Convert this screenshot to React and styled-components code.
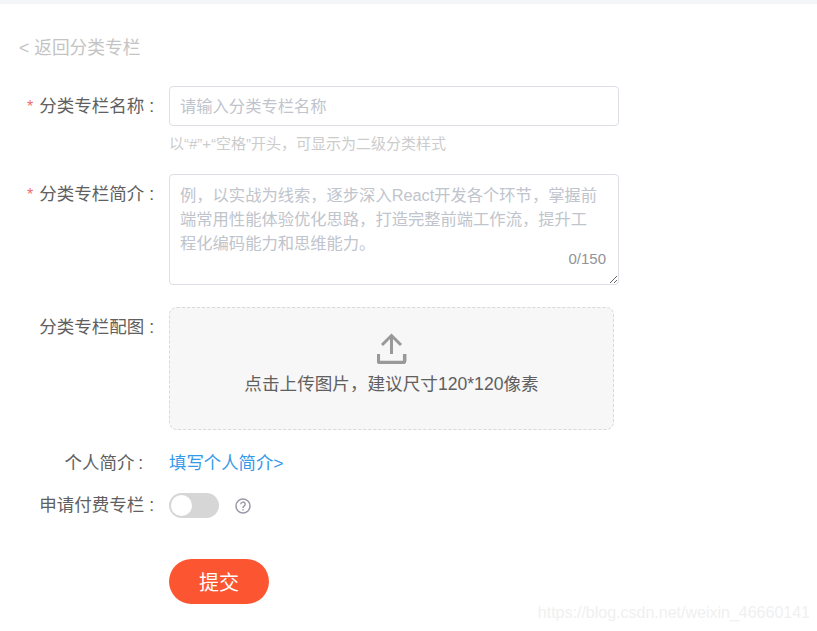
import React from 'react';
import styled, { createGlobalStyle } from 'styled-components';

const GlobalStyle = createGlobalStyle`
  html, body { margin: 0; padding: 0; background: #fff; }
  body { font-family: "Liberation Sans", "Noto Sans CJK SC", sans-serif; color: #555; }
`;

const Page = styled.div`
  position: relative;
  width: 817px;
  height: 631px;
  overflow: hidden;
  border-top: 4px solid #f4f5f7;
  box-sizing: border-box;
`;

const BackLink = styled.a`
  display: block;
  margin: 32px 0 0 19px;
  height: 24px;
  line-height: 24px;
  font-size: 17.7px;
  color: #c4c4c4;
`;

const Form = styled.form`
  display: flex;
  flex-direction: column;
  margin-top: 26px;
`;

const Row = styled.div`
  display: grid;
  grid-template-columns: 169px 1fr;
  align-items: ${p => (p.$center ? 'center' : 'start')};
  margin-top: ${p => p.$top || 0}px;
`;

const Label = styled.label`
  padding-right: ${p => (p.$tight ? 26 : 15)}px;
  height: ${p => (p.$center ? 'auto' : '40px')};
  line-height: ${p => (p.$center ? '23px' : '40px')};
  font-size: 17.5px;
  color: #606060;
  text-align: right;
  white-space: pre;
`;

const Star = styled.span`
  color: #f56c6c;
  margin-right: 6px;
  font-size: 16px;
`;

const TextInput = styled.input`
  display: block;
  width: 450px;
  height: 40px;
  padding: 0 10px;
  box-sizing: border-box;
  border: 1px solid #dcdfe6;
  border-radius: 4px;
  outline: none;
  font: 16.3px "Liberation Sans", "Noto Sans CJK SC", sans-serif;
  &::placeholder { color: #c0c4cc; opacity: 1; }
`;

const Hint = styled.div`
  margin-top: 8px;
  height: 20px;
  line-height: 20px;
  font-size: 15px;
  color: #ccc;
`;

const AreaWrap = styled.div`
  position: relative;
  width: 450px;
  height: 111px;
`;

const TextArea = styled.textarea`
  display: block;
  width: 450px;
  height: 111px;
  padding: 8px 16px 8px 10px;
  box-sizing: border-box;
  border: 1px solid #dcdfe6;
  border-radius: 4px;
  outline: none;
  font: 16.3px/24px "Liberation Sans", "Noto Sans CJK SC", sans-serif;
  &::placeholder { color: #c0c4cc; opacity: 1; }
`;

const Counter = styled.span`
  position: absolute;
  right: 13px;
  bottom: 18px;
  font-size: 15px;
  line-height: 16px;
  color: #909399;
`;

const Upload = styled.div`
  display: flex;
  flex-direction: column;
  align-items: center;
  width: 445px;
  height: 123px;
  padding-top: 25px;
  box-sizing: border-box;
  background: #f7f7f7;
  border: 1px dashed #d9d9d9;
  border-radius: 8px;
`;

const UploadText = styled.div`
  margin-top: 8px;
  line-height: 24px;
  font-size: 17.6px;
  color: #606060;
`;

const BlueLink = styled.a`
  font-size: 17.4px;
  line-height: 24px;
  color: #3499e8;
`;

const SwitchRow = styled.div`
  display: flex;
  align-items: center;
  gap: 16px;
`;

const Switch = styled.span`
  position: relative;
  display: block;
  width: 50px;
  height: 25px;
  border-radius: 13px;
  background: #d6d6d6;
`;

const Knob = styled.span`
  position: absolute;
  top: 2px;
  left: 2px;
  width: 21px;
  height: 21px;
  border-radius: 50%;
  background: #fff;
`;

const SubmitButton = styled.button`
  display: block;
  width: 100px;
  height: 45px;
  padding: 0;
  border: 0;
  border-radius: 23px;
  background: #fc5531;
  color: #fff;
  font: 20px "Liberation Sans", "Noto Sans CJK SC", sans-serif;
`;

const Watermark = styled.div`
  position: absolute;
  right: 7px;
  bottom: 8px;
  font-size: 16px;
  line-height: 20px;
  color: #f0f0f0;
`;

const UploadIcon = () => (
  <svg width="30" height="31" viewBox="0.5 0 30 31" fill="none" stroke="#999" strokeWidth="3">
    <path d="M15 21V3M5.5 12L15 2.5 24.5 12" />
    <path d="M1.8 21v6.5a2 2 0 0 0 2 2h22.4a2 2 0 0 0 2-2V21" strokeWidth="3.5" />
  </svg>
);

const HelpIcon = () => (
  <svg width="16" height="16" viewBox="0 0 16 16" fill="none" stroke="#9a9aa8" strokeWidth="1.5">
    <circle cx="8" cy="8" r="7" />
    <path d="M5.8 6.3a2.2 2.2 0 1 1 3.3 1.9c-.7.4-1.1.9-1.1 1.6v.3" />
    <path d="M8 11.3v1.3" />
  </svg>
);

export default function App() {
  return (
    <Page>
      <GlobalStyle />
      <BackLink>&lt; 返回分类专栏</BackLink>
      <Form>
        <Row>
          <Label><Star>*</Star>分类专栏名称 :</Label>
          <div>
            <TextInput placeholder="请输入分类专栏名称" />
            <Hint>以“#”+“空格”开头，可显示为二级分类样式</Hint>
          </div>
        </Row>
        <Row $top={20}>
          <Label><Star>*</Star>分类专栏简介 :</Label>
          <AreaWrap>
            <TextArea placeholder="例，以实战为线索，逐步深入React开发各个环节，掌握前端常用性能体验优化思路，打造完整前端工作流，提升工程化编码能力和思维能力。" />
            <Counter>0/150</Counter>
          </AreaWrap>
        </Row>
        <Row $top={22}>
          <Label>分类专栏配图 :</Label>
          <Upload>
            <UploadIcon />
            <UploadText>点击上传图片，建议尺寸120*120像素</UploadText>
          </Upload>
        </Row>
        <Row $center $top={21}>
          <Label $center $tight>个人简介{'\u2009'}:</Label>
          <BlueLink>填写个人简介&gt;</BlueLink>
        </Row>
        <Row $center $top={18}>
          <Label $center>申请付费专栏 :</Label>
          <SwitchRow>
            <Switch><Knob /></Switch>
            <HelpIcon />
          </SwitchRow>
        </Row>
        <Row $top={41}>
          <span />
          <SubmitButton type="button">提交</SubmitButton>
        </Row>
      </Form>
      <Watermark>https://blog.csdn.net/weixin_46660141</Watermark>
    </Page>
  );
}
